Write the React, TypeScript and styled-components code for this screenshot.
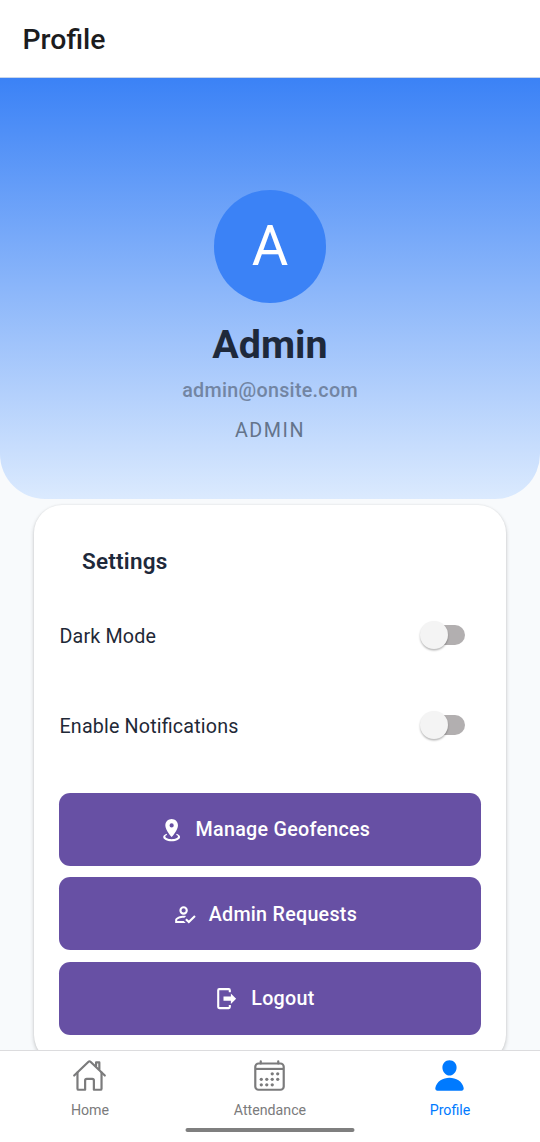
import React from "react";
import styled, { createGlobalStyle } from "styled-components";
import { IoCalendarOutline, IoHomeOutline, IoPerson } from "react-icons/io5";

const GlobalStyle = createGlobalStyle`
  * { box-sizing: border-box; }
  body { margin: 0; font-family: Roboto, "Liberation Sans", sans-serif; background: #fff; }
`;

const Screen = styled.div`
  width: 540px;
  height: 1142px;
  display: flex;
  flex-direction: column;
  overflow: hidden;
  background: #f8fafc;
`;

const Header = styled.header`
  flex: none;
  height: 78px;
  padding: 2px 22.5px 0;
  display: flex;
  align-items: center;
  background: #fff;
  border-bottom: 1px solid #c9d6ea;
`;

const HeaderTitle = styled.h1`
  margin: 0;
  font-size: 28.4px;
  line-height: 34px;
  font-weight: 500;
  color: #1c1c1e;
`;

const Content = styled.main`
  flex: 1;
  min-height: 0;
  overflow: hidden;
  display: flex;
  flex-direction: column;
`;

const Hero = styled.section`
  flex: none;
  height: 421px;
  padding-top: 112px;
  display: flex;
  flex-direction: column;
  align-items: center;
  border-radius: 0 0 45px 45px;
  background: linear-gradient(180deg, #3b82f6 0%, #dbeafe 100%);
`;

const Avatar = styled.div`
  width: 112.5px;
  height: 112.5px;
  border-radius: 50%;
  display: flex;
  align-items: center;
  justify-content: center;
  background: #3b82f6;
  color: #fff;
  font-size: 56px;
  line-height: 56px;
`;

const Name = styled.h2`
  margin: 18.5px 0 0;
  font-size: 39.4px;
  line-height: 48px;
  font-weight: 700;
  color: #1e293b;
`;

const Email = styled.p`
  margin: 10px 0 0;
  font-size: 19.7px;
  line-height: 24px;
  font-weight: 500;
  letter-spacing: 0.3px;
  color: #7285a3;
`;

const Role = styled.p`
  margin: 16px 0 0;
  font-size: 19.7px;
  line-height: 24px;
  letter-spacing: 1.55px;
  color: #64748b;
`;

const Card = styled.section`
  flex: none;
  height: 558px;
  margin: 6px 33.6px 0;
  padding: 38.6px 25.9px 0;
  border-radius: 28px;
  background: #fff;
  box-shadow: 0 2px 4px rgba(0, 0, 0, 0.2), 0 0 2px rgba(0, 0, 0, 0.08);
`;

const CardTitle = styled.h3`
  margin: 0 0 22.4px 22.5px;
  font-size: 22.5px;
  line-height: 34px;
  font-weight: 600;
  letter-spacing: 0.22px;
  color: #1e293b;
`;

const SettingRow = styled.div`
  height: 90px;
  padding-right: 15.2px;
  display: flex;
  align-items: flex-start;
  justify-content: space-between;
`;

const SettingLabel = styled.span`
  margin-top: 20px;
  font-size: 19.7px;
  line-height: 34px;
  letter-spacing: 0.17px;
  font-feature-settings: "liga" 1;
  color: #1f2937;
`;

const Track = styled.button`
  width: 44px;
  height: 20px;
  margin-top: 25px;
  padding: 0;
  border: 0;
  border-radius: 10px;
  display: flex;
  align-items: center;
  background: #b2afb0;
`;

const Thumb = styled.span`
  flex: none;
  width: 28px;
  height: 28px;
  margin-left: -1.8px;
  border-radius: 50%;
  background: #f4f4f4;
  box-shadow: 0 1.5px 2px rgba(0, 0, 0, 0.28);
`;

const Actions = styled.div`
  margin: 12.6px -0.1px 0;
  display: flex;
  flex-direction: column;
  gap: 11.5px;
`;

const ActionButton = styled.button`
  height: 73.2px;
  padding: 1.6px 11px 0 0;
  border: 0;
  border-radius: 11.25px;
  display: flex;
  align-items: center;
  justify-content: center;
  gap: 11.5px;
  background: #6750a4;
  color: #fff;
  font: 500 19.7px/28px Roboto, "Liberation Sans", sans-serif;
  letter-spacing: 0.27px;
`;

const ActionIcon = styled.svg`
  width: 25.3px;
  height: 25.3px;
  margin-top: -1px;
  fill: currentColor;
`;

const TabBar = styled.nav`
  flex: none;
  height: 92px;
  position: relative;
  display: grid;
  grid-template-columns: repeat(3, 1fr);
  background: #fff;
  border-top: 1px solid #dcdcde;
`;

const Tab = styled.a<{ $active?: boolean }>`
  padding-top: 7px;
  display: flex;
  flex-direction: column;
  align-items: center;
  color: ${({ $active }) => ($active ? "#007aff" : "#7b7b7c")};
  font-size: 14.2px;
  line-height: 18px;

  svg { width: 35px; height: 35px; margin: 0 0.6px 8px 0; }
`;

const HomeIndicator = styled.span`
  position: absolute;
  left: 50%;
  bottom: 10px;
  width: 169px;
  height: 4px;
  transform: translateX(-50%);
  border-radius: 2px;
  background: #7f7f7f;
`;

const settings = ["Dark Mode", "Enable Notifications"];

const actions = [
  {
    label: "Manage Geofences",
    path: "M12,2C15.31,2 18,4.66 18,7.95C18,12.41 12,19 12,19C12,19 6,12.41 6,7.95C6,4.66 8.69,2 12,2M12,6A2,2 0 0,0 10,8A2,2 0 0,0 12,10A2,2 0 0,0 14,8A2,2 0 0,0 12,6M20,19C20,21.21 16.42,23 12,23C7.58,23 4,21.21 4,19C4,17.71 5.22,16.56 7.11,15.83L7.75,16.74C6.67,17.19 6,17.81 6,18.5C6,19.88 8.69,21 12,21C15.31,21 18,19.88 18,18.5C18,17.81 17.33,17.19 16.25,16.74L16.89,15.83C18.78,16.56 20,17.71 20,19Z",
  },
  {
    label: "Admin Requests",
    path: "M21.1,12.5L22.5,13.91L15.97,20.5L12.5,17L13.9,15.59L15.97,17.67L21.1,12.5M11,4A4,4 0 0,1 15,8A4,4 0 0,1 11,12A4,4 0 0,1 7,8A4,4 0 0,1 11,4M11,6A2,2 0 0,0 9,8A2,2 0 0,0 11,10A2,2 0 0,0 13,8A2,2 0 0,0 11,6M11,13C11.68,13 12.5,13.09 13.41,13.26L11.74,14.93L11,14.9C8.03,14.9 4.9,16.36 4.9,17V18.1H11.1L13,20H3V17C3,14.34 8.33,13 11,13Z",
  },
  {
    label: "Logout",
    path: "M16,17V14H9V10H16V7L21,12L16,17M14,2A2,2 0 0,1 16,4V6H14V4H5V20H14V18H16V20A2,2 0 0,1 14,22H5A2,2 0 0,1 3,20V4A2,2 0 0,1 5,2H14Z",
  },
];

export default function App() {
  return (
    <Screen>
      <GlobalStyle />
      <Header>
        <HeaderTitle>Profile</HeaderTitle>
      </Header>
      <Content>
        <Hero>
          <Avatar>A</Avatar>
          <Name>Admin</Name>
          <Email>admin@onsite.com</Email>
          <Role>ADMIN</Role>
        </Hero>
        <Card>
          <CardTitle>Settings</CardTitle>
          {settings.map((label) => (
            <SettingRow key={label}>
              <SettingLabel>{label}</SettingLabel>
              <Track role="switch" aria-checked={false} aria-label={label}>
                <Thumb />
              </Track>
            </SettingRow>
          ))}
          <Actions>
            {actions.map(({ label, path }) => (
              <ActionButton key={label}>
                <ActionIcon viewBox="0 0 24 24">
                  <path d={path} />
                </ActionIcon>
                {label}
              </ActionButton>
            ))}
          </Actions>
        </Card>
      </Content>
      <TabBar>
        <Tab><IoHomeOutline />Home</Tab>
        <Tab><IoCalendarOutline />Attendance</Tab>
        <Tab $active><IoPerson />Profile</Tab>
        <HomeIndicator />
      </TabBar>
    </Screen>
  );
}
